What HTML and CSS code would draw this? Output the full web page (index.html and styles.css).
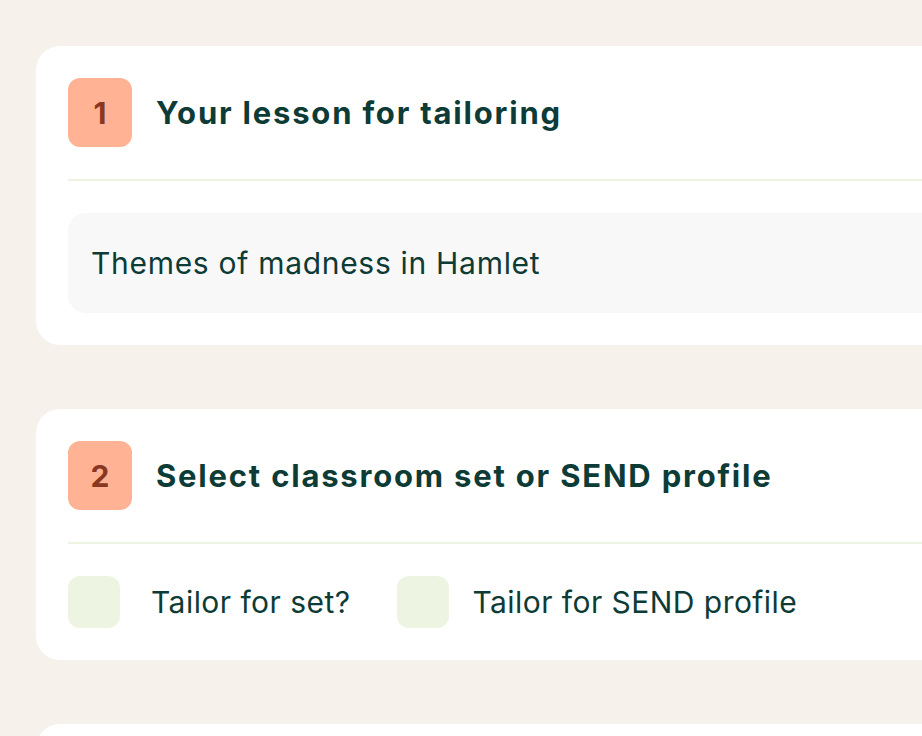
FILE: index.html
```html
<!DOCTYPE html>
<html lang="en">
<head>
<meta charset="utf-8">
<title>Tailor lesson</title>
<link rel="stylesheet" href="styles.css">
</head>
<body>
<main class="page">
  <section class="card">
    <div class="card-head">
      <div class="step">1</div>
      <h2 class="title">Your lesson for tailoring</h2>
    </div>
    <div class="card-body">
      <div class="lesson-input">Themes of madness in Hamlet</div>
    </div>
  </section>
  <section class="card">
    <div class="card-head">
      <div class="step">2</div>
      <h2 class="title">Select classroom set or SEND profile</h2>
    </div>
    <div class="card-body options">
      <label class="option option-set"><span class="check"></span><span class="option-label">Tailor for set?</span></label>
      <label class="option option-send"><span class="check"></span><span class="option-label">Tailor for SEND profile</span></label>
    </div>
  </section>
  <section class="card card-next"></section>
</main>
</body>
</html>
```

FILE: styles.css
```css
html, body {
  margin: 0;
  padding: 0;
  background: #f6f1ea;
  overflow: hidden;
  height: 100%;
}
body {
  font-family: Inter, "Noto Sans", sans-serif;
  color: #0d3b36;
}
.page {
  width: 1100px;
  padding: 46px 0 0 36px;
  display: flex;
  flex-direction: column;
  gap: 64px;
}
.card {
  background: #ffffff;
  border-radius: 24px;
  padding: 32px;
}
.card-next {
  height: 120px;
}
.card-head {
  display: flex;
  align-items: center;
  gap: 24px;
  padding-bottom: 32px;
  border-bottom: 2px solid #edf5e2;
}
.step {
  width: 64px;
  height: 69px;
  border-radius: 12px;
  background: #ffb394;
  color: #8a3721;
  font-weight: 700;
  font-size: 30px;
  display: flex;
  align-items: center;
  justify-content: center;
}
.title {
  margin: 0;
  font-size: 31px;
  font-weight: 700;
  letter-spacing: 1.8px;
  color: #0d3b36;
}
.card-body {
  padding-top: 32px;
}
.lesson-input {
  background: #f8f8f8;
  border-radius: 18px;
  height: 100px;
  display: flex;
  align-items: center;
  padding: 0 23px;
  font-size: 30px;
  letter-spacing: 0.7px;
}
.options {
  display: flex;
  align-items: center;
  gap: 47px;
}
.option {
  display: flex;
  align-items: center;
}
.check {
  width: 52px;
  height: 52px;
  border-radius: 12px;
  background: #edf5e2;
}
.option-set .check { margin-right: 31px; }
.option-send .check { margin-right: 23px; }
.option-label {
  font-size: 30px;
  letter-spacing: 0.45px;
}
```
